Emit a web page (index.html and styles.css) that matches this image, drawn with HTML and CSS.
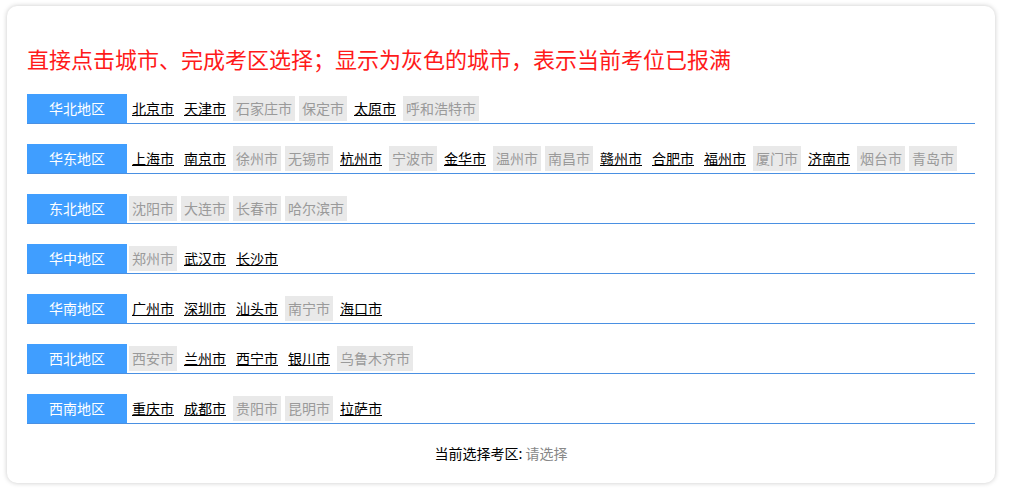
FILE: index.html
```html
<!DOCTYPE html>
<html lang="zh-CN">
<head>
<meta charset="utf-8">
<title>考区选择</title>
<link rel="stylesheet" href="styles.css">
</head>
<body>
<div class="card">
  <h1 class="title">直接点击城市、完成考区选择；显示为灰色的城市，表示当前考位已报满</h1>

  <div class="region">
    <div class="region-name">华北地区</div>
    <div class="cities">
      <a class="city">北京市</a><a class="city">天津市</a><span class="city full">石家庄市</span><span class="city full">保定市</span><a class="city">太原市</a><span class="city full">呼和浩特市</span>
    </div>
  </div>

  <div class="region">
    <div class="region-name">华东地区</div>
    <div class="cities">
      <a class="city">上海市</a><a class="city">南京市</a><span class="city full">徐州市</span><span class="city full">无锡市</span><a class="city">杭州市</a><span class="city full">宁波市</span><a class="city">金华市</a><span class="city full">温州市</span><span class="city full">南昌市</span><a class="city">赣州市</a><a class="city">合肥市</a><a class="city">福州市</a><span class="city full">厦门市</span><a class="city">济南市</a><span class="city full">烟台市</span><span class="city full">青岛市</span>
    </div>
  </div>

  <div class="region">
    <div class="region-name">东北地区</div>
    <div class="cities">
      <span class="city full">沈阳市</span><span class="city full">大连市</span><span class="city full">长春市</span><span class="city full">哈尔滨市</span>
    </div>
  </div>

  <div class="region">
    <div class="region-name">华中地区</div>
    <div class="cities">
      <span class="city full">郑州市</span><a class="city">武汉市</a><a class="city">长沙市</a>
    </div>
  </div>

  <div class="region">
    <div class="region-name">华南地区</div>
    <div class="cities">
      <a class="city">广州市</a><a class="city">深圳市</a><a class="city">汕头市</a><span class="city full">南宁市</span><a class="city">海口市</a>
    </div>
  </div>

  <div class="region">
    <div class="region-name">西北地区</div>
    <div class="cities">
      <span class="city full">西安市</span><a class="city">兰州市</a><a class="city">西宁市</a><a class="city">银川市</a><span class="city full">乌鲁木齐市</span>
    </div>
  </div>

  <div class="region">
    <div class="region-name">西南地区</div>
    <div class="cities">
      <a class="city">重庆市</a><a class="city">成都市</a><span class="city full">贵阳市</span><span class="city full">昆明市</span><a class="city">拉萨市</a>
    </div>
  </div>

  <div class="current">当前选择考区: <span class="placeholder">请选择</span></div>
</div>
</body>
</html>
```

FILE: styles.css
```css
html, body {
  margin: 0;
  padding: 0;
  background: #ffffff;
}
body {
  padding: 6px 17px 14px 7px;
  font-family: "Noto Sans CJK SC", "Noto Sans", "Liberation Sans", sans-serif;
  font-size: 14px;
  color: #000;
}
.card {
  width: 988px;
  height: 477px;
  box-sizing: border-box;
  padding: 37px 20px 20px 20px;
  border-radius: 10px;
  background: #fff;
  box-shadow: 0 0 5px rgba(0, 0, 0, 0.22);
}
.title {
  margin: 0 0 21px 0;
  font-size: 22px;
  font-weight: normal;
  line-height: 30px;
  color: #ff1a1a;
  white-space: nowrap;
}
.region {
  display: flex;
  align-items: center;
  height: 29px;
  border-bottom: 1px solid #4a90e2;
  margin-bottom: 20px;
}
.region-name {
  width: 100px;
  height: 29px;
  line-height: 29px;
  flex: none;
  text-align: center;
  background: #409eff;
  color: #fff;
  font-size: 14px;
}
.cities {
  display: flex;
  align-items: center;
  padding-left: 0;
}
.city {
  display: block;
  margin: 0 2px;
  padding: 0 3px;
  height: 25px;
  line-height: 25px;
  color: #000;
  text-decoration: underline;
  white-space: nowrap;
  cursor: pointer;
}
.city.full {
  background: #e9e9e9;
  color: #9a9a9a;
  text-decoration: none;
  cursor: default;
}
.current {
  margin-top: -1px;
  text-align: center;
  line-height: 20px;
  font-size: 14px;
  color: #000;
}
.placeholder {
  color: #888;
}
```
